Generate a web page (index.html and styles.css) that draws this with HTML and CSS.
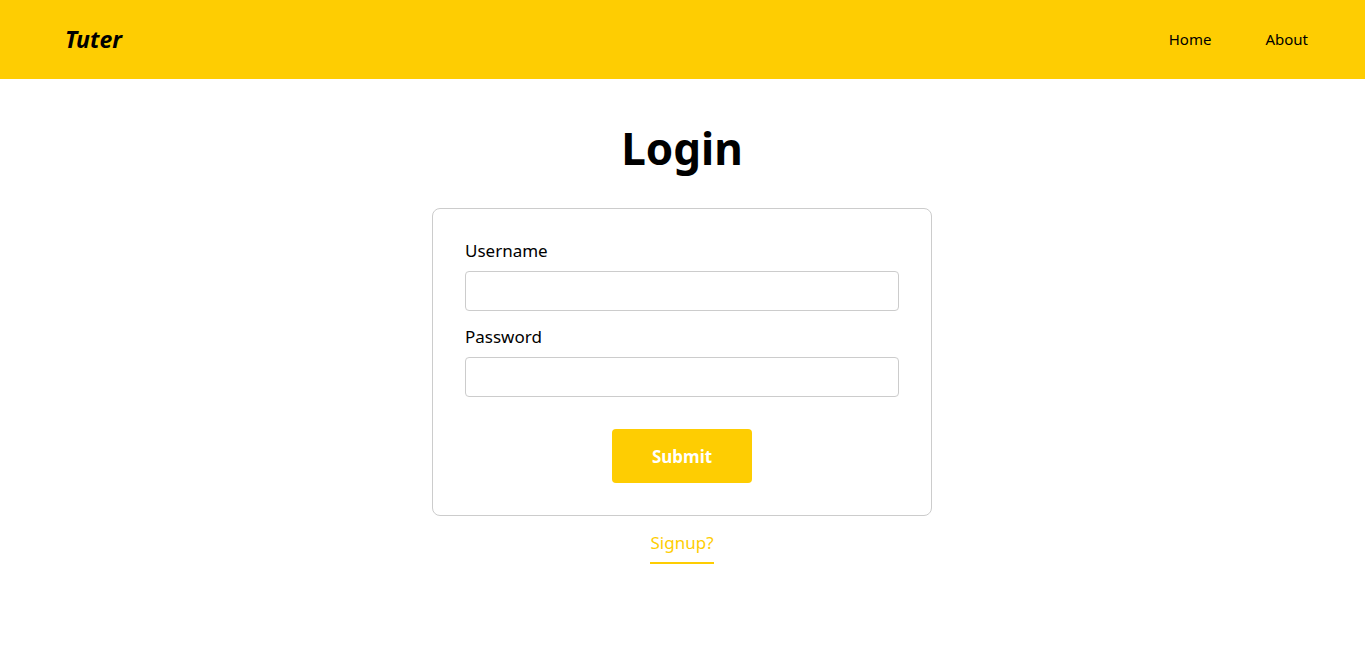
FILE: index.html
```html
<!DOCTYPE html>
<html lang="en">
<head>
<meta charset="utf-8">
<title>Tuter - Login</title>
<link rel="stylesheet" href="styles.css">
</head>
<body>
<header class="topbar">
  <a class="brand" href="#">Tuter</a>
  <nav class="nav">
    <a href="#">Home</a>
    <a href="#">About</a>
  </nav>
</header>
<main class="main">
  <h1 class="title">Login</h1>
  <form class="card">
    <label class="label" for="u">Username</label>
    <input class="input" id="u" type="text">
    <label class="label label-gap" for="p">Password</label>
    <input class="input" id="p" type="password">
    <div class="actions"><button class="btn" type="button">Submit</button></div>
  </form>
  <a class="signup" href="#">Signup?</a>
</main>
</body>
</html>
```
FILE: styles.css
```css
* { box-sizing: border-box; }
body {
  margin: 0;
  font-family: "Noto Sans", "Open Sans", sans-serif;
  color: #000;
  background: #fff;
}
.topbar {
  height: 79px;
  background: #fecd02;
  display: flex;
  align-items: center;
  justify-content: space-between;
  padding: 0 57px 2px 65px;
}
.brand {
  font-size: 23px;
  font-weight: 700;
  font-style: italic;
  color: #000;
  text-decoration: none;
}
.nav { display: flex; gap: 54px; }
.nav a {
  font-size: 15px;
  color: #000;
  text-decoration: none;
}
.main {
  display: flex;
  flex-direction: column;
  align-items: center;
  padding-right: 1px;
}
.title {
  margin: 41px 0 32px;
  font-size: 44px;
  line-height: 56px;
  font-weight: 700;
}
.card {
  width: 500px;
  border: 1px solid #cccccc;
  border-radius: 8px;
  padding: 31px 32px 32px;
  display: flex;
  flex-direction: column;
}
.label {
  font-size: 17px;
  line-height: 22px;
  margin-bottom: 9px;
}
.label-gap { margin-top: 15px; }
.input {
  height: 40px;
  border: 1px solid #cccccc;
  border-radius: 4px;
  font: inherit;
  padding: 0 10px;
}
.actions {
  display: flex;
  justify-content: center;
  margin-top: 32px;
}
.btn {
  width: 140px;
  height: 54px;
  border: 0;
  border-radius: 4px;
  background: #fecd02;
  color: #fff;
  font-family: inherit;
  font-size: 17px;
  font-weight: 700;
}
.signup {
  margin-top: 16px;
  font-size: 17px;
  line-height: 22px;
  color: #fecd02;
  text-decoration: none;
  padding-bottom: 8px;
  border-bottom: 2px solid #fecd02;
}
```
